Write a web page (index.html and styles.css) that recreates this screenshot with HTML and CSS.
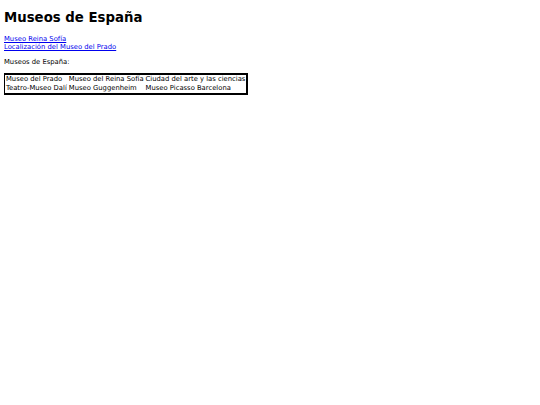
FILE: index.html
```html
<!DOCTYPE html>
<html lang="es">
<head>
<meta charset="utf-8">
<title>Museos de España</title>
<link rel="stylesheet" href="styles.css">
</head>
<body class="page">
<h1 class="title">Museos de España</h1>
<p class="links">
<a href="#reina">Museo Reina Sofía</a><br>
<a href="#prado">Localización del Museo del Prado</a>
</p>
<p class="intro">Museos de España:</p>
<table class="museums">
<tr><td>Museo del Prado</td><td>Museo del Reina Sofía</td><td>Ciudad del arte y las ciencias</td></tr>
<tr><td>Teatro-Museo Dalí</td><td>Museo Guggenheim</td><td>Museo Picasso Barcelona</td></tr>
</table>
</body>
</html>
```

FILE: styles.css
```css
.page {
  margin: 4px;
  font-family: "DejaVu Sans", Verdana, sans-serif;
  font-size: 6.8px;
  line-height: 8px;
  color: #000;
  background: #fff;
}
.title {
  font-size: 13.3px;
  line-height: 16px;
  font-weight: bold;
  margin: 6px 0 9px;
}
.links {
  margin: 0 0 7px;
}
.links a {
  color: #0000ee;
}
.intro {
  margin: 0 0 7px;
}
.museums {
  border: 2px solid #000;
  border-collapse: separate;
  border-spacing: 0;
  font-size: 6.8px;
  margin-left: -1px;
}
.museums td {
  padding: 0 1px 0 1px;
  line-height: 9px;
  white-space: nowrap;
}
```
